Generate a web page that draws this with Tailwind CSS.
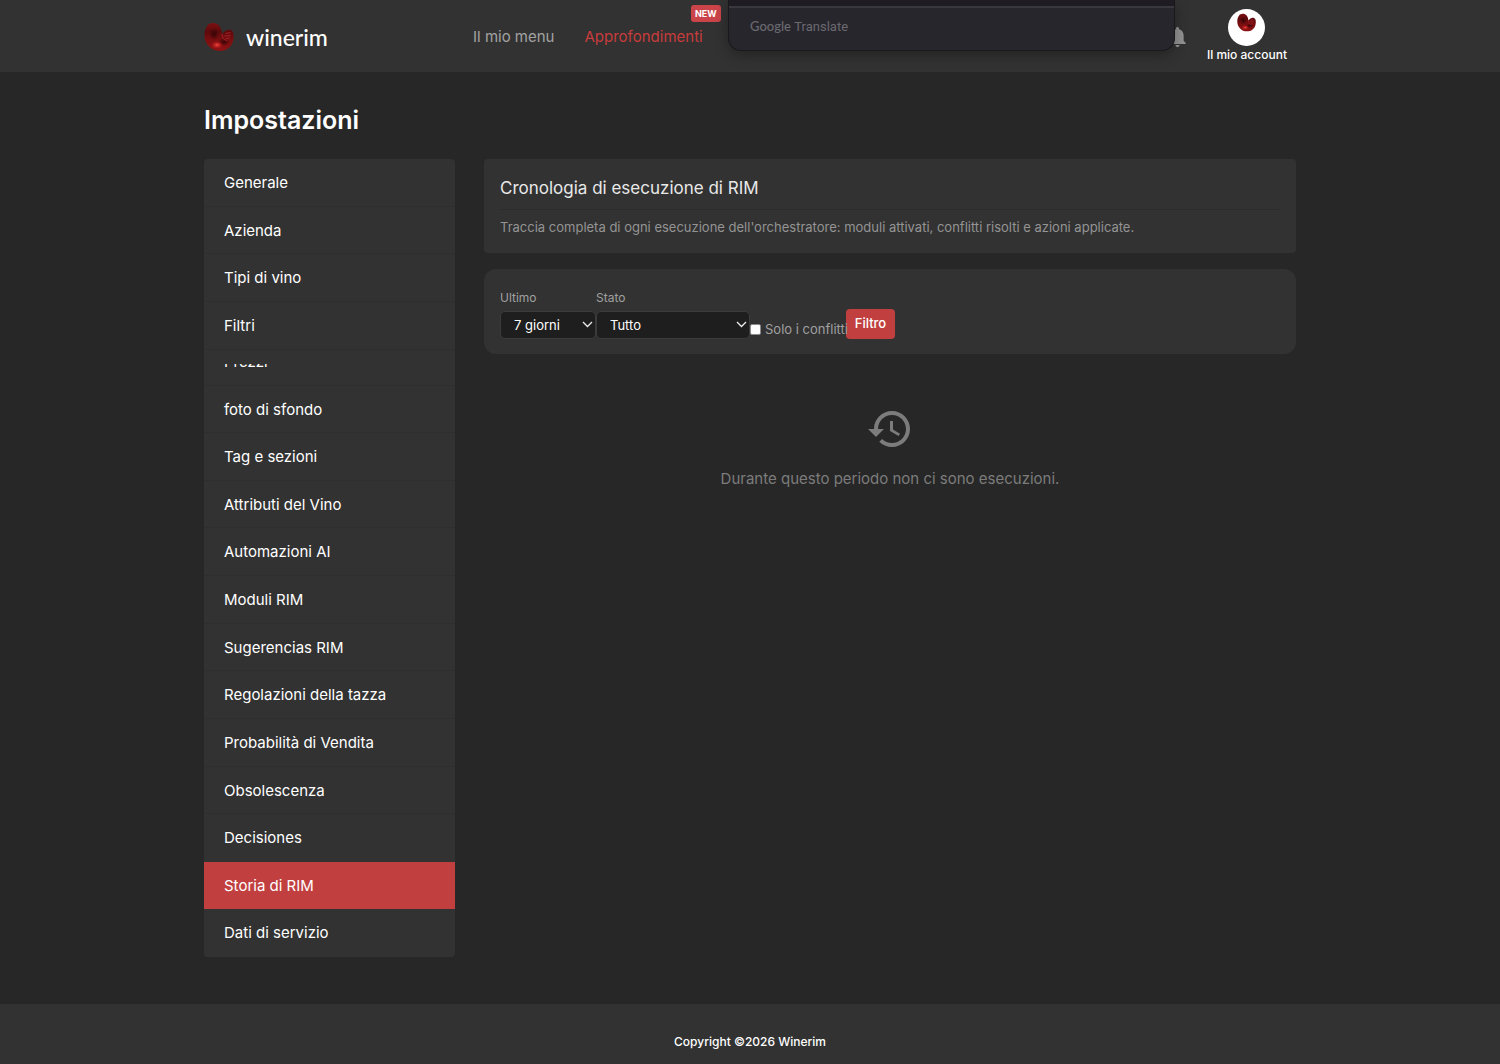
<!DOCTYPE html>
<html lang="it">
<head>
<meta charset="utf-8">
<meta name="viewport" content="width=device-width, initial-scale=1">
<title>Winerim - Impostazioni</title>
<script src="https://cdn.jsdelivr.net/npm/@tailwindcss/browser@4"></script>
</head>
<body class="flex min-h-screen flex-col bg-[#272727] font-['Inter',sans-serif] text-[15px] text-white">

<svg class="absolute h-0 w-0" aria-hidden="true">
  <defs>
    <linearGradient id="wine" x1="0" y1="0" x2="0" y2="1">
      <stop offset="0" stop-color="#7e1012"/>
      <stop offset="0.3" stop-color="#5e0a0c"/>
      <stop offset="0.6" stop-color="#7a0e10"/>
      <stop offset="1" stop-color="#8e1214"/>
    </linearGradient>
    <radialGradient id="shade"><stop offset="0" stop-color="#2a0304" stop-opacity="0.8"/><stop offset="1" stop-color="#2a0304" stop-opacity="0"/></radialGradient>
    <radialGradient id="glow"><stop offset="0" stop-color="#f04a42"/><stop offset="0.5" stop-color="#c02020" stop-opacity="0.8"/><stop offset="1" stop-color="#b01a1c" stop-opacity="0"/></radialGradient>
    <symbol id="mark" viewBox="0 0 30 30">
      <path d="M.5 12C1 5.500 4 1 9 1C14 1 17.500 4.500 18 12C20 9 24 6.800 27 8C30 9.500 30 14 29.300 18C28 25 22 29.200 15.500 29C7 28.800-.2 21.500.5 12Z" fill="url(#wine)"/>
      <ellipse cx="10" cy="12" rx="5" ry="6" fill="url(#shade)"/>
      <ellipse cx="20" cy="20" rx="6" ry="4" fill="url(#shade)"/>
      <ellipse cx="13" cy="23" rx="6" ry="4" fill="url(#glow)"/>
      <path d="M18 12C18 15.500 20 18 23 18.500M21.500 11.500l5-1M20.500 14l6-.5M22 16.500l3.500-.5" fill="none" stroke="#a8242c" stroke-width="0.900"/>
    </symbol>
  </defs>
</svg>

<header class="relative h-18 overflow-hidden bg-[#323232]">
  <div class="mx-auto flex h-full max-w-[1092px] items-center pt-px">
    <a href="#" class="flex w-[269px] items-center gap-3">
      <svg class="size-[30px]" aria-hidden="true"><use href="#mark"/></svg>
      <span class="font-['Lato',sans-serif] text-[23px] leading-7 font-medium">winerim</span>
    </a>
    <nav class="flex gap-[30px] leading-6">
      <a href="#" class="text-[#a3a3a3]">Il mio menu</a>
      <a href="#" class="relative text-[#c83c3c]">Approfondimenti
        <span class="absolute -top-5 -right-[18px] rounded-[3px] bg-[#cb444a] px-1 text-[9px] leading-[17px] font-bold text-white">NEW</span>
      </a>
    </nav>
    <div class="ml-auto flex h-full items-center gap-[21px] pr-[9px]">
      <button type="button" aria-label="Notifiche">
        <svg class="h-5 w-[17px]" viewBox="4 2.500 16 19.500" fill="#929292" aria-hidden="true"><path d="M12 22c1.100 0 2-.9 2-2h-4c0 1.100.89 2 2 2zm6-6v-5c0-3.070-1.640-5.640-4.500-6.320V4c0-.83-.67-1.500-1.500-1.500s-1.500.67-1.500 1.500v.68C7.630 5.360 6 7.920 6 11v5l-2 2v1h16v-1l-2-2z"/></svg>
      </button>
      <a href="#" class="flex flex-col items-center gap-px pb-[2px] text-xs leading-4 font-medium">
        <span class="flex size-[37px] justify-center rounded-full bg-white pt-1"><svg class="size-[19px]" aria-hidden="true"><use href="#mark"/></svg></span>
        Il mio account
      </a>
    </div>
  </div>
  <div class="absolute top-0 left-1/2 -ml-[22px] flex h-[51px] w-[447px] flex-col overflow-hidden rounded-b-[13px] border border-t-0 border-[#19181b] bg-[#28262d] shadow-[0_4px_14px_rgba(0,0,0,0.3)]">
    <div class="h-2 shrink-0 border-b-2 border-[#3a383f] bg-[#1e1c22]"></div>
    <p class="px-[21px] pt-2 font-['Lato',sans-serif] text-[13px] leading-5 text-[#6a6970]"><span class="font-medium">Google</span> <span class="font-['Roboto',sans-serif]">Translate</span></p>
  </div>
</header>

<main class="mx-auto w-full max-w-[1092px] flex-1 pt-7 pb-[47px]">
  <h1 class="text-[25px] leading-10 font-semibold">Impostazioni</h1>
  <div class="mt-[19px] flex items-start gap-[29px]">
    <nav class="w-[251px] shrink-0 overflow-hidden rounded bg-[#323232]" aria-label="Impostazioni">
      <ul class="flex min-h-[798px] flex-col leading-6">
        <li class="flex grow border-b border-[#2e2e2e]"><a href="#" class="flex-1 px-5 pt-3 pb-[10px]">Generale</a></li>
        <li class="flex grow border-b border-[#2e2e2e]"><a href="#" class="flex-1 px-5 pt-3 pb-[10px]">Azienda</a></li>
        <li class="flex grow border-b border-[#2e2e2e]"><a href="#" class="flex-1 px-5 pt-3 pb-[10px]">Tipi di vino</a></li>
        <li class="flex grow border-b border-[#2e2e2e]"><a href="#" class="flex-1 px-5 pt-3 pb-[10px]">Filtri</a></li>
        <li class="h-9 border-b border-[#2e2e2e] px-5 pt-[14px]"><a href="#" class="flex h-[10px] items-end overflow-hidden">Prezzi</a></li>
        <li class="flex grow border-b border-[#2e2e2e]"><a href="#" class="flex-1 px-5 pt-3 pb-[10px]">foto di sfondo</a></li>
        <li class="flex grow border-b border-[#2e2e2e]"><a href="#" class="flex-1 px-5 pt-3 pb-[10px]">Tag e sezioni</a></li>
        <li class="flex grow border-b border-[#2e2e2e]"><a href="#" class="flex-1 px-5 pt-3 pb-[10px]">Attributi del Vino</a></li>
        <li class="flex grow border-b border-[#2e2e2e]"><a href="#" class="flex-1 px-5 pt-3 pb-[10px]">Automazioni AI</a></li>
        <li class="flex grow border-b border-[#2e2e2e]"><a href="#" class="flex-1 px-5 pt-3 pb-[10px]">Moduli RIM</a></li>
        <li class="flex grow border-b border-[#2e2e2e]"><a href="#" class="flex-1 px-5 pt-3 pb-[10px]">Sugerencias RIM</a></li>
        <li class="flex grow border-b border-[#2e2e2e]"><a href="#" class="flex-1 px-5 pt-3 pb-[10px]">Regolazioni della tazza</a></li>
        <li class="flex grow border-b border-[#2e2e2e]"><a href="#" class="flex-1 px-5 pt-3 pb-[10px]">Probabilità di Vendita</a></li>
        <li class="flex grow border-b border-[#2e2e2e]"><a href="#" class="flex-1 px-5 pt-3 pb-[10px]">Obsolescenza</a></li>
        <li class="flex grow border-b border-[#323232]"><a href="#" class="flex-1 px-5 pt-3 pb-[10px]">Decisiones</a></li>
        <li class="flex grow border-b border-[#c13f3f] bg-[#c13f3f]"><a href="#" aria-current="page" class="flex-1 px-5 pt-3 pb-[10px]">Storia di RIM</a></li>
        <li class="flex grow border-b border-[#323232]"><a href="#" class="flex-1 px-5 pt-3 pb-[10px]">Dati di servizio</a></li>
      </ul>
    </nav>

    <div class="min-w-0 flex-1">
      <section class="rounded bg-[#323232] px-4 pt-4 pb-4">
        <h2 class="border-b border-[#2b2b2b] pb-2 text-[17px] leading-[26px] text-[#e8e8e8]">Cronologia di esecuzione di RIM</h2>
        <p class="pt-[7px] text-[13px] leading-5 text-[#949494]">Traccia completa di ogni esecuzione dell'orchestratore: moduli attivati, conflitti risolti e azioni applicate.</p>
      </section>

      <form class="mt-4 flex h-[85px] items-end rounded-xl bg-[#323232] px-4 pb-[15px] text-[13px] text-[#a0a0a0]">
        <div class="flex w-24 flex-col">
          <label for="periodo" class="mb-[3px] text-xs leading-5">Ultimo</label>
          <span class="relative flex">
            <select id="periodo" class="h-7 w-full appearance-none rounded-[5px] border border-[#3b3b3b] bg-[#1e1e1e] px-[13px] pt-[2px] text-white"><option>7 giorni</option></select>
            <svg class="pointer-events-none absolute top-[10px] right-[3px] h-[7px] w-[11px]" viewBox="0 0 11 7" fill="none" stroke="#eee" stroke-width="1.300" aria-hidden="true"><path d="M1 1l4.500 4.500L10 1"/></svg>
          </span>
        </div>
        <div class="flex w-[154px] flex-col">
          <label for="stato" class="mb-[3px] text-xs leading-5">Stato</label>
          <span class="relative flex">
            <select id="stato" class="h-7 w-full appearance-none rounded-[5px] border border-[#3b3b3b] bg-[#1e1e1e] px-[13px] pt-[2px] text-white"><option>Tutto</option></select>
            <svg class="pointer-events-none absolute top-[10px] right-[3px] h-[7px] w-[11px]" viewBox="0 0 11 7" fill="none" stroke="#eee" stroke-width="1.300" aria-hidden="true"><path d="M1 1l4.500 4.500L10 1"/></svg>
          </span>
        </div>
        <label class="relative z-10 flex w-24 items-center gap-1 whitespace-nowrap leading-5">
          <input type="checkbox" class="size-[11px] shrink-0 appearance-none rounded-[2px] border border-[#8a8a8a] bg-white">Solo i conflitti
        </label>
        <button type="submit" class="h-[30px] w-[49px] rounded bg-[#c13f3f] text-[13px] font-medium text-white">Filtro</button>
      </form>

      <div class="flex flex-col items-center pt-[51px] text-[#7c7c7c]">
        <svg class="size-12" viewBox="0 0 24 24" fill="currentColor" aria-hidden="true"><path d="M13 3c-4.970 0-9 4.030-9 9H1l3.890 3.890.07.14L9 12H6c0-3.870 3.130-7 7-7s7 3.130 7 7-3.130 7-7 7c-1.930 0-3.680-.79-4.940-2.060l-1.420 1.420C8.270 19.990 10.510 21 13 21c4.970 0 9-4.030 9-9s-4.030-9-9-9zm-1 5v5l4.280 2.540.72-1.210-3.500-2.080V8H12z"/></svg>
        <p class="mt-[14px] leading-6">Durante questo periodo non ci sono esecuzioni.</p>
      </div>
    </div>
  </div>
</main>

<footer class="bg-[#323232] pt-7 pb-3 text-center text-xs leading-5 font-medium">Copyright ©2026 Winerim</footer>
</body>
</html>
